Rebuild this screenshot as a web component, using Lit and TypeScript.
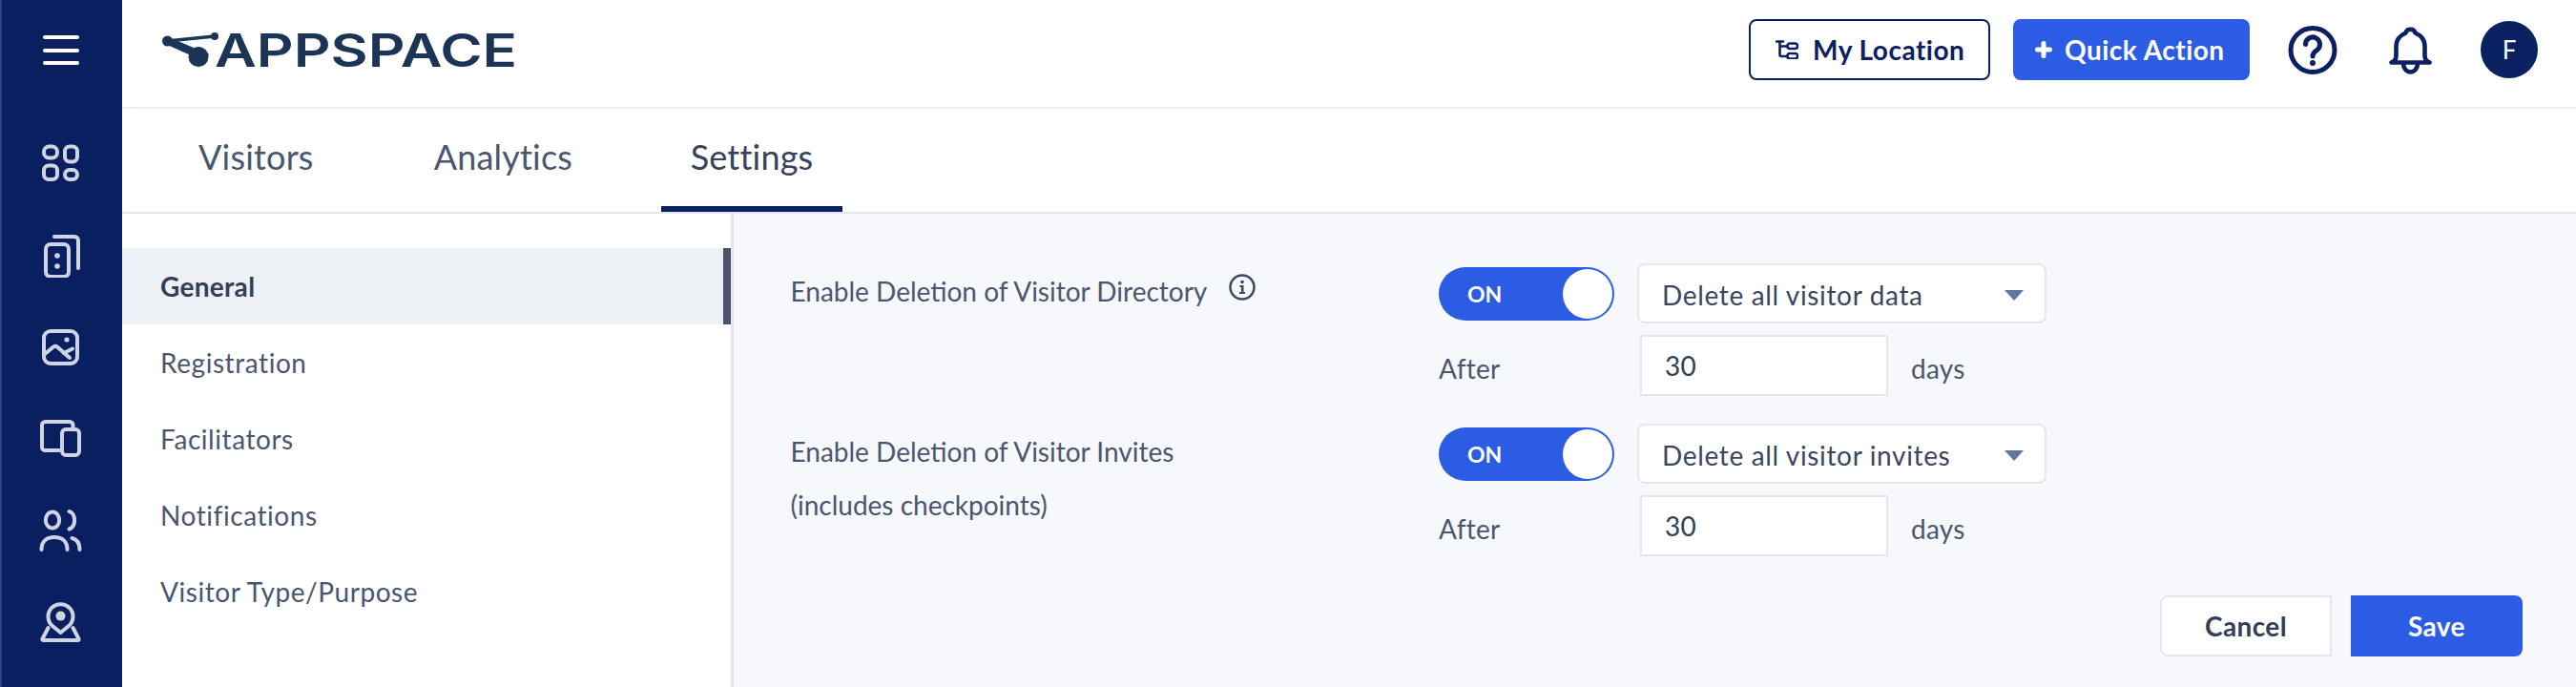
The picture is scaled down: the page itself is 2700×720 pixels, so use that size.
import { LitElement, html, css } from "lit";
import { customElement } from "lit/decorators.js";

const ICONS = [
  html`<svg class="ico" viewBox="0 0 48 48"><rect x="6" y="6.500" width="14" height="12" rx="5.500"/><rect x="28" y="6.500" width="13" height="16" rx="5"/><rect x="6" y="26.400" width="14" height="14.600" rx="5"/><rect x="28" y="31" width="13" height="10" rx="5"/></svg>`,
  html`<svg class="ico" viewBox="0 0 48 48"><rect x="8" y="13" width="24" height="34" rx="5"/><path d="M17 5H38a4 4 0 0 1 4 4V38"/><circle class="dot" cx="20" cy="25" r="2.800"/><circle class="dot" cx="20" cy="36" r="2.800"/></svg>`,
  html`<svg class="ico" viewBox="0 0 48 48"><rect x="6" y="8" width="35" height="34" rx="7"/><circle class="dot" cx="30" cy="17" r="2.600"/><path d="M7 32L16 24.500Q18 23 20 24.500L33 36"/><path d="M27 31L36 26.500"/></svg>`,
  html`<svg class="ico" viewBox="0 0 48 48"><path d="M22 37H7.500a3.500 3.500 0 0 1-3.500-3.500V10.500A3.500 3.500 0 0 1 7.500 7H33a3.500 3.500 0 0 1 3.500 3.500V14"/><rect x="25" y="15" width="18" height="27" rx="4"/></svg>`,
  html`<svg class="ico" viewBox="0 0 48 48"><ellipse cx="15" cy="14" rx="7.200" ry="8.500"/><path d="M32.500 5C40 7 40 21 32.500 23.500"/><path d="M3.500 45C3.500 36 9 32 17 32C25 32 30.500 36 30.500 45"/><path d="M35.500 33C40 34 43.500 38 43.500 45"/></svg>`,
  html`<svg class="ico" viewBox="0 0 48 48"><path d="M15 29A13 13 0 1 1 32 29L23.500 36Z"/><circle class="dot" cx="23.500" cy="18.600" r="5"/><path d="M10.500 31L4.500 42.500Q4 44 5.500 44H41.500Q43 44 42.500 42.500L36.500 31"/></svg>`,
];

@customElement("app-root")
export class AppRoot extends LitElement {
  static styles = css`
    :host {
      display: flex;
      width: 2700px;
      height: 720px;
      overflow: hidden;
      background: #fff;
      font-family: Lato, "Liberation Sans", sans-serif;
      font-size: 28px;
      color: #4a566f;
    }
    * { box-sizing: border-box; }
    .rail {
      flex: 0 0 128px;
      height: 720px;
      background: #0a1f60;
      box-shadow: inset 2px 0 0 #2f4180;
      display: flex;
      flex-direction: column;
      align-items: center;
    }
    .burger {
      height: 123px;
      padding-top: 37px;
      display: flex;
      flex-direction: column;
      gap: 9.5px;
    }
    .burger span {
      display: block;
      width: 38px;
      height: 4px;
      border-radius: 2px;
      background: #fff;
    }
    .slot {
      height: 96px;
      display: flex;
      align-items: center;
      justify-content: center;
    }
    .ico {
      width: 48px;
      height: 48px;
      fill: none;
      stroke: #cfd4e4;
      stroke-width: 4;
      stroke-linecap: round;
      stroke-linejoin: round;
    }
    .ico .dot { fill: #cfd4e4; stroke: none; }
    .main { flex: 1; min-width: 0; display: flex; flex-direction: column; }
    .header {
      height: 114px;
      display: flex;
      align-items: flex-start;
      padding: 20px 40px 0 42px;
      border-bottom: 2px solid #efeff2;
    }
    .logo { width: 372px; height: 40px; margin-top: 13px; display: block; overflow: visible; }
    .logo text {
      font-family: Inter, "Liberation Sans", sans-serif;
      font-weight: 600;
      font-size: 48px;
      fill: #1c3557;
    }
    .logo path, .logo circle { fill: #1c3557; }
    .logo .bar { fill: none; stroke: #1c3557; stroke-width: 3.6; stroke-linecap: round; }
    .actions { margin-left: auto; display: flex; align-items: flex-start; }
    .btn {
      height: 64px;
      border-radius: 8px;
      display: flex;
      align-items: center;
      font-weight: 700;
      letter-spacing: 0.5px;
      white-space: nowrap;
    }
    .loc {
      width: 253px;
      border: 2.5px solid #0a2062;
      color: #0a2062;
      padding-left: 26px;
      gap: 15px;
    }
    .quick {
      width: 248px;
      margin-left: 24px;
      background: #2c5ce3;
      color: #fff;
      padding-left: 23px;
      gap: 13px;
    }
    .loc svg { width: 24px; height: 20px; fill: none; stroke: #0a2062; stroke-width: 2.6; stroke-linecap: round; }
    .quick svg { width: 18px; height: 18px; fill: none; stroke: #fff; stroke-width: 5; stroke-linecap: round; }
    .help { width: 52px; height: 52px; margin: 7px 0 0 40px; fill: none; stroke: #0a2062; stroke-width: 5; stroke-linecap: round; }
    .help .q { fill: #0a2062; stroke: none; }
    .bell { width: 45px; height: 51px; margin: 8px 0 0 54px; fill: none; stroke: #0a2062; stroke-width: 4.6; stroke-linejoin: round; stroke-linecap: round; }
    .avatar {
      width: 60px;
      height: 60px;
      margin: 2px 0 0 51px;
      border-radius: 50%;
      background: #0b2262;
      color: #fff;
      font-size: 26px;
      display: flex;
      align-items: center;
      justify-content: center;
    }
    .tabs {
      height: 110px;
      display: flex;
      gap: 64px;
      padding-left: 49px;
      border-bottom: 2px solid #e3e6f2;
    }
    .tab {
      padding: 0 31px 8px;
      display: flex;
      align-items: center;
      font-size: 36px;
      letter-spacing: 0.2px;
      color: #4a566f;
    }
    .tab.on {
      color: #36425c;
      border-bottom: 6px solid #0a2062;
      padding: 0 30.5px 2px;
      margin-left: -2px;
    }
    .body { flex: 1; display: flex; min-height: 0; }
    .nav {
      flex: 0 0 641px;
      padding-top: 36px;
      border-right: 3px solid #e3e6f2;
      letter-spacing: 0.56px;
    }
    .item { height: 80px; padding-left: 40px; display: flex; align-items: center; }
    .item.on {
      background: #edf0f5;
      border-right: 8px solid #48536c;
      font-weight: 700;
      letter-spacing: 0.3px;
      color: #333f57;
    }
    .content {
      flex: 1;
      background: #f7f8fc;
      padding: 52px 56px 0 59.5px;
    }
    .row { display: flex; height: 168px; }
    .label { flex: 0 0 679.5px; line-height: 56px; padding-top: 1px; }
    .label .line { display: flex; align-items: center; gap: 23px; }
    .info { width: 28px; height: 28px; margin-top: -8px; fill: none; stroke: #3d4961; stroke-width: 2.5; stroke-linecap: round; }
    .info .i { fill: #3d4961; stroke: none; }
    .top { display: flex; gap: 24px; }
    .toggle {
      width: 184px;
      height: 56px;
      margin-top: 4px;
      border-radius: 28px;
      background: #2c5ce3;
      color: #fff;
      font-size: 23px;
      font-weight: 700;
      display: flex;
      align-items: center;
      justify-content: space-between;
      padding: 0 2px 0 30px;
    }
    .knob { width: 52px; height: 52px; border-radius: 50%; background: #fff; }
    .select {
      width: 429px;
      height: 63px;
      background: #fff;
      border: 2.5px solid #e3e7f2;
      border-radius: 8px;
      padding: 3px 22px 0 24px;
      display: flex;
      align-items: center;
      justify-content: space-between;
      color: #3b465e;
      letter-spacing: 0.65px;
    }
    .caret { width: 20px; height: 11px; fill: #6573a0; }
    .bottom { display: flex; margin-top: 12px; letter-spacing: 0.3px; }
    .after { width: 211px; padding-top: 19px; line-height: 32px; }
    .input {
      width: 260px;
      height: 64px;
      background: #fff;
      border: 2.5px solid #e3e7f2;
      padding-left: 24px;
      display: flex;
      align-items: center;
      color: #333f57;
    }
    .days { margin-left: 24px; padding-top: 19px; line-height: 32px; }
    .foot { display: flex; justify-content: flex-end; gap: 20px; margin-top: 12px; }
    .act {
      width: 180px;
      height: 64px;
      display: flex;
      align-items: center;
      justify-content: center;
      font-weight: 700;
      letter-spacing: 0.4px;
    }
    .cancel { background: #fff; border: 2.5px solid #e3e6f2; border-radius: 8px 0 0 8px; color: #333f57; }
    .save { background: #2c5ce3; color: #fff; border-radius: 0 8px 8px 0; }
  `;

  private controls(option: string) {
    return html`
      <div>
        <div class="top">
          <div class="toggle"><span>ON</span><span class="knob"></span></div>
          <div class="select"><span>${option}</span>
            <svg class="caret" viewBox="0 0 20 11"><path d="M0 0H20L10 11Z"/></svg>
          </div>
        </div>
        <div class="bottom">
          <span class="after">After</span>
          <div class="input">30</div>
          <span class="days">days</span>
        </div>
      </div>`;
  }

  render() {
    return html`
      <aside class="rail">
        <div class="burger"><span></span><span></span><span></span></div>
        ${ICONS.map((i) => html`<div class="slot">${i}</div>`)}
      </aside>
      <div class="main">
        <header class="header">
          <svg class="logo" viewBox="0 0 372 40">
            <line class="bar" x1="5" y1="10" x2="55" y2="5"/>
            <circle cx="5.500" cy="10" r="5.500"/>
            <circle cx="55" cy="5" r="4"/>
            <path d="M3 13L7 6L33 17L30 25Z"/>
            <circle cx="38" cy="26.500" r="10.500"/>
            <path d="M38 16L49 24L44 33Z"/>
            <text x="55" y="37" textLength="317" lengthAdjust="spacingAndGlyphs">APPSPACE</text>
          </svg>
          <div class="actions">
            <div class="btn loc">
              <svg viewBox="0 0 24 20"><path d="M1 1.500H8M4.500 1.500V15.500Q4.500 17 6 17H12M4.500 6.500H12"/><rect x="12.500" y="3.500" width="10.500" height="5.500" rx="2.500"/><rect x="12.500" y="14" width="10.500" height="5.500" rx="2.500"/></svg>
              <span>My Location</span>
            </div>
            <div class="btn quick">
              <svg viewBox="0 0 18 18"><path d="M9 2.500V15.500M2.500 9H15.500"/></svg>
              <span>Quick Action</span>
            </div>
            <svg class="help" viewBox="0 0 52 52">
              <circle cx="26" cy="25.500" r="23"/>
              <path d="M18.500 19.500a7.500 7.500 0 1 1 11.500 6.300c-2.600 1.600-4 3-4 6.200"/>
              <circle class="q" cx="26" cy="39" r="3"/>
            </svg>
            <svg class="bell" viewBox="0 0 45 51">
              <path d="M2.500 37.500C6 36.500 7.500 34 7.500 30V20C7.500 13.500 12 9 17.500 6.500C18.500 1.500 26.500 1.500 27.500 6.500C33 9 37.500 13.500 37.500 20V30C37.500 34 39 36.500 42.500 37.500Z"/>
              <path d="M15 38.500A7.500 9 0 0 0 30 38.500"/>
            </svg>
            <div class="avatar">F</div>
          </div>
        </header>
        <nav class="tabs">
          <div class="tab">Visitors</div>
          <div class="tab">Analytics</div>
          <div class="tab on">Settings</div>
        </nav>
        <div class="body">
          <div class="nav">
            <div class="item on">General</div>
            <div class="item">Registration</div>
            <div class="item">Facilitators</div>
            <div class="item">Notifications</div>
            <div class="item">Visitor Type/Purpose</div>
          </div>
          <div class="content">
            <div class="row">
              <div class="label"><div class="line">Enable Deletion of Visitor Directory
                <svg class="info" viewBox="0 0 28 28"><circle cx="14" cy="14" r="12.500"/><circle class="i" cx="14" cy="8.500" r="1.800"/><path class="i" d="M11.500 12H15.500V19H17V21H11V19H13V14H11.500Z"/></svg>
              </div></div>
              ${this.controls("Delete all visitor data")}
            </div>
            <div class="row">
              <div class="label"><div>Enable Deletion of Visitor Invites</div><div>(includes checkpoints)</div></div>
              ${this.controls("Delete all visitor invites")}
            </div>
            <div class="foot">
              <div class="act cancel">Cancel</div>
              <div class="act save">Save</div>
            </div>
          </div>
        </div>
      </div>`;
  }
}
